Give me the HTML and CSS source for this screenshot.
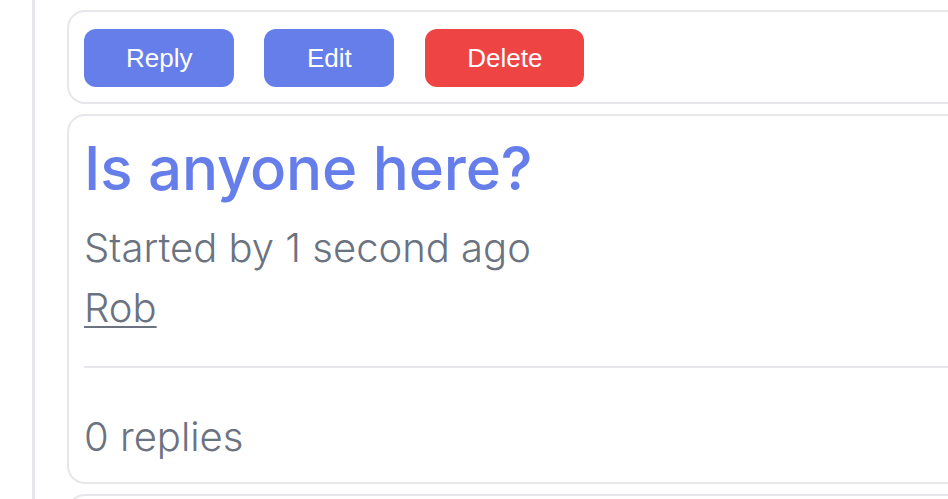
FILE: index.html
```html
<!DOCTYPE html>
<html>
<head>
<meta charset="utf-8">
<link rel="stylesheet" href="styles.css">
</head>
<body>
<div class="thread">
  <div class="card actions">
    <button class="btn btn-blue">Reply</button>
    <button class="btn btn-blue btn-edit">Edit</button>
    <button class="btn btn-red">Delete</button>
  </div>
  <div class="card post">
    <h1 class="title">Is anyone here?</h1>
    <p class="meta">Started by 1 second ago</p>
    <a class="author" href="#">Rob</a>
    <hr class="divider">
    <p class="replies">0 replies</p>
  </div>
  <div class="card next"></div>
</div>
</body>
</html>
```
FILE: styles.css
```css
html, body {
  margin: 0;
  padding: 0;
  background: #ffffff;
  overflow: hidden;
  height: 499px;
}
.thread {
  margin-left: 32px;
  border-left: 3px solid #e5e7eb;
  padding-left: 32px;
  padding-top: 10px;
  display: flex;
  flex-direction: column;
  gap: 10px;
  height: 499px;
  overflow: hidden;
  box-sizing: border-box;
}
.card {
  width: 1000px;
  border: 2px solid #e5e7eb;
  border-radius: 18px;
  background: #fff;
  box-sizing: border-box;
  flex: none;
}
.actions {
  display: flex;
  gap: 30px;
  padding: 17px 15px 15px;
}
.btn {
  height: 58px;
  padding: 0 42px;
  border: none;
  border-radius: 12px;
  color: #fff;
  font-family: "Liberation Sans", Arial, sans-serif;
  font-size: 26px;
  cursor: pointer;
}
.btn-edit { padding: 0 42.5px; }
.btn-red { margin-left: 1px; }
.btn-blue { background: #667eea; }
.btn-red { background: #ef4444; }
.post {
  padding: 16px 15px 15px;
  font-family: Inter, "Noto Sans", sans-serif;
  display: flex;
  flex-direction: column;
  align-items: flex-start;
}
.title {
  margin: 0;
  color: #667eea;
  font-size: 60px;
  font-weight: 500;
  line-height: 72px;
  letter-spacing: -0.2px;
}
.meta,
.author,
.replies {
  color: #6b7280;
  font-size: 40px;
  font-weight: 300;
  line-height: 60px;
}
.meta {
  margin: 14px 0 0;
}
.author {
  text-decoration: underline;
  text-decoration-thickness: 2px;
  text-underline-offset: 4px;
}
.divider {
  align-self: stretch;
  margin: 28px 0 0;
  border: none;
  border-top: 2px solid #e5e7eb;
}
.replies {
  margin: 39px 0 0;
}
.next {
  height: 40px;
}
```
